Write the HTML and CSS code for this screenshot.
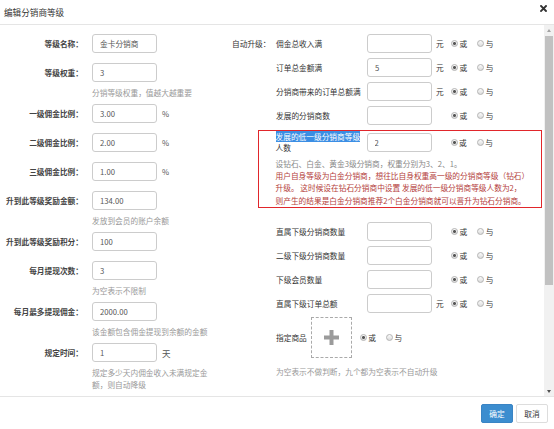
FILE: index.html
```html
<!DOCTYPE html>
<html lang="zh-CN">
<head>
<meta charset="utf-8">
<title>编辑分销商等级</title>
<link rel="stylesheet" href="styles.css">
</head>
<body>
<div class="modal">
  <div class="hd">
    <span class="title">编辑分销商等级</span>
    <svg class="close" width="7" height="7" viewBox="0 0 7 7"><path d="M1 1L6 6M6 1L1 6" stroke="#333" stroke-width="1.9" stroke-linecap="square"/></svg>
  </div>
  <div class="bd">
    <div class="content">
      <div class="left">
        <div class="frow"><span class="flabel">等级名称：</span><input class="inp" value="金卡分销商"></div>
        <div class="frow"><span class="flabel">等级权重：</span><input class="inp" value="3"></div>
        <div class="hint">分销等级权重，值越大越重要</div>
        <div class="frow"><span class="flabel">一级佣金比例：</span><input class="inp" value="3.00"><span class="lunit">%</span></div>
        <div class="frow"><span class="flabel">二级佣金比例：</span><input class="inp" value="2.00"><span class="lunit">%</span></div>
        <div class="frow"><span class="flabel">三级佣金比例：</span><input class="inp" value="1.00"><span class="lunit">%</span></div>
        <div class="frow"><span class="flabel">升到此等级奖励金额：</span><input class="inp" value="134.00"></div>
        <div class="hint">发放到会员的账户余额</div>
        <div class="frow"><span class="flabel">升到此等级奖励积分：</span><input class="inp" value="100"></div>
        <div class="frow"><span class="flabel">每月提现次数：</span><input class="inp" value="3"></div>
        <div class="hint">为空表示不限制</div>
        <div class="frow"><span class="flabel">每月最多提现佣金：</span><input class="inp" value="2000.00"></div>
        <div class="hint">该金额包含佣金提现到余额的金额</div>
        <div class="frow"><span class="flabel">规定时间：</span><input class="inp" value="1"><span class="lunit big">天</span></div>
        <div class="hint wrap">规定多少天内佣金收入未满规定金额，则自动降级</div>
      </div>
      <div class="right">
        <span class="auto-label">自动升级：</span>
        <div class="rrow"><span class="rlabel">佣金总收入满</span><input class="inp"><span class="unit">元</span><span class="radios"><span class="radio on"><i></i>或</span><span class="radio"><i></i>与</span></span></div>
        <div class="rrow"><span class="rlabel">订单总金额满</span><input class="inp" value="5"><span class="unit">元</span><span class="radios"><span class="radio on"><i></i>或</span><span class="radio"><i></i>与</span></span></div>
        <div class="rrow"><span class="rlabel">分销商带来的订单总额满</span><input class="inp"><span class="unit">元</span><span class="radios"><span class="radio on"><i></i>或</span><span class="radio"><i></i>与</span></span></div>
        <div class="rrow"><span class="rlabel">发展的分销商数</span><input class="inp"><span class="unit"></span><span class="radios"><span class="radio on"><i></i>或</span><span class="radio"><i></i>与</span></span></div>
        <div class="redbox">
          <div class="rrow"><span class="rlabel"><span class="sel">发展的低一级分销商等级</span>人数</span><input class="inp" value="2"><span class="unit"></span><span class="radios"><span class="radio on"><i></i>或</span><span class="radio"><i></i>与</span></span></div>
          <p class="note">设钻石、白金、黄金3级分销商，权重分别为3、2、1。</p>
          <p class="warn">用户自身等级为白金分销商，想往比自身权重高一级的分销商等级（钻石）<br>升级。 这时候设在钻石分销商中设置 发展的低一级分销商等级人数为2，<br>则产生的结果是白金分销商推荐2个白金分销商就可以晋升为钻石分销商。</p>
        </div>
        <div class="rrow"><span class="rlabel">直属下级分销商数量</span><input class="inp"><span class="unit"></span><span class="radios"><span class="radio on"><i></i>或</span><span class="radio"><i></i>与</span></span></div>
        <div class="rrow"><span class="rlabel">二级下级分销商数量</span><input class="inp"><span class="unit"></span><span class="radios"><span class="radio on"><i></i>或</span><span class="radio"><i></i>与</span></span></div>
        <div class="rrow"><span class="rlabel">下级会员数量</span><input class="inp"><span class="unit"></span><span class="radios"><span class="radio on"><i></i>或</span><span class="radio"><i></i>与</span></span></div>
        <div class="rrow"><span class="rlabel">直属下级订单总额</span><input class="inp"><span class="unit">元</span><span class="radios"><span class="radio on"><i></i>或</span><span class="radio"><i></i>与</span></span></div>
        <div class="goods">
          <span>指定商品</span>
          <span class="gbox"><svg width="15" height="15" viewBox="0 0 15 15"><rect x="5.5" y="0" width="4" height="15" fill="#9b9b9b"/><rect x="0" y="5.5" width="15" height="4" fill="#9b9b9b"/></svg></span>
          <span class="radios"><span class="radio on"><i></i>或</span><span class="radio"><i></i>与</span></span>
        </div>
        <div class="rhint">为空表示不做判断，九个都为空表示不自动升级</div>
      </div>
    </div>
    <div class="sbar">
      <span class="sb-btn"><i class="arr-up"></i></span>
      <span class="thumb"></span>
      <span class="sb-btn down"><i class="arr-down"></i></span>
    </div>
  </div>
  <div class="ft">
    <button class="btn primary">确定</button>
    <button class="btn default">取消</button>
  </div>
</div>
</body>
</html>
```

FILE: styles.css
```css
* { box-sizing: border-box; }
html, body { margin: 0; padding: 0; }
body {
  width: 554px;
  height: 429px;
  overflow: hidden;
  background: #fff;
  font-family: "Noto Sans CJK SC", "Noto Sans", sans-serif;
  font-size: 7.7px;
  color: #333;
}
.modal { width: 554px; height: 429px; display: flex; flex-direction: column; }

.hd {
  height: 25px;
  flex-shrink: 0;
  border-bottom: 1px solid #e5e5e5;
  display: flex;
  justify-content: space-between;
  padding: 0 7px 0 4px;
}
.title { font-size: 8.6px; line-height: 25px; color: #333; }
.close { margin-top: 5px; }

.bd { height: 371px; flex-shrink: 0; display: flex; }
.content { flex: 1; min-width: 0; display: flex; padding-top: 4px; overflow: hidden; }

.left { width: 232px; flex-shrink: 0; }
.frow { height: 29px; display: flex; align-items: center; }
.flabel {
  width: 83px;
  margin-right: 9px;
  text-align: right;
  white-space: nowrap;
  font-weight: bold;
  color: #444;
}
.inp {
  width: 65px;
  height: 19px;
  flex-shrink: 0;
  margin: 0;
  padding: 0 7px;
  border: 1px solid #ccc;
  border-radius: 3px;
  background: #fff;
  font: inherit;
  font-weight: normal;
  color: #555;
  outline: none;
}
.lunit { margin-left: 5px; color: #555; }
.lunit.big { font-size: 8.5px; }
.hint { padding-left: 92px; line-height: 12px; color: #999; }
.hint.wrap { width: 210px; }

.right {
  width: 310px;
  flex-shrink: 0;
  display: grid;
  grid-template-columns: 26px 18px 1fr;
  row-gap: 5px;
  align-content: start;
  padding-top: 5px;
}
.auto-label { grid-column: 1 / 3; grid-row: 1; align-self: center; white-space: nowrap; color: #333; }
.rrow { grid-column: 3; display: flex; align-items: center; height: 19px; }
.rlabel { width: 91px; flex-shrink: 0; color: #333; }
.unit { width: 19px; flex-shrink: 0; padding-left: 4px; color: #333; }
.radios { display: flex; align-items: center; }
.radio { display: flex; align-items: center; margin-right: 10px; color: #333; }
.radio i {
  width: 7px;
  height: 7px;
  margin-right: 1.5px;
  border: 1px solid #b3b3b3;
  border-radius: 50%;
  background: linear-gradient(#fafafa, #dcdcdc);
}
.radio.on i {
  background: radial-gradient(circle, #555 0, #555 1.2px, rgba(85,85,85,0) 1.7px), linear-gradient(#fafafa, #dcdcdc);
}

.redbox {
  grid-column: 2 / 4;
  border: 1.5px solid #e1262b;
  padding: 1px 5px 0 16.5px;
  margin-bottom: 9px;
}
.redbox .rrow { height: 21px; }
.redbox .rlabel { line-height: 10.5px; }
.sel { background: #3b8ee4; color: #fff; }
.note { margin: 5px 0 0; line-height: 12.2px; color: #888; }
.warn { margin: 0; line-height: 12.2px; color: #b4403b; }

.goods { grid-column: 3; display: flex; align-items: center; margin-top: -1px; color: #333; }
.gbox {
  width: 41px;
  height: 41px;
  margin: 0 8px 0 4px;
  border: 1px dashed #aaa;
  display: flex;
  align-items: center;
  justify-content: center;
}
.rhint { grid-column: 3; margin-top: 3px; line-height: 12px; color: #999; }

.sbar { width: 10px; flex-shrink: 0; background: #f1f1f1; display: flex; flex-direction: column; }
.sb-btn { height: 10px; display: flex; align-items: center; justify-content: center; }
.sb-btn.down { margin-top: auto; }
.arr-up { width: 0; height: 0; border-left: 2.5px solid transparent; border-right: 2.5px solid transparent; border-bottom: 3px solid #a3a3a3; }
.arr-down { width: 0; height: 0; border-left: 2.5px solid transparent; border-right: 2.5px solid transparent; border-top: 3px solid #505050; }
.thumb { height: 249px; margin: 1px 1px 0 1px; background: #c1c1c1; }

.ft {
  height: 33px;
  flex-shrink: 0;
  border-top: 1px solid #e5e5e5;
  display: flex;
  justify-content: flex-end;
  align-items: flex-start;
  gap: 3px;
  padding: 7px 6px 0 0;
}
.btn {
  width: 32px;
  height: 19px;
  padding: 0;
  border-radius: 2px;
  font: inherit;
  display: flex;
  align-items: center;
  justify-content: center;
}
.btn.primary { background: #3c8dcf; border: 1px solid #3a84c4; color: #fff; }
.btn.default { background: #fff; border: 1px solid #ddd; color: #333; }
```
